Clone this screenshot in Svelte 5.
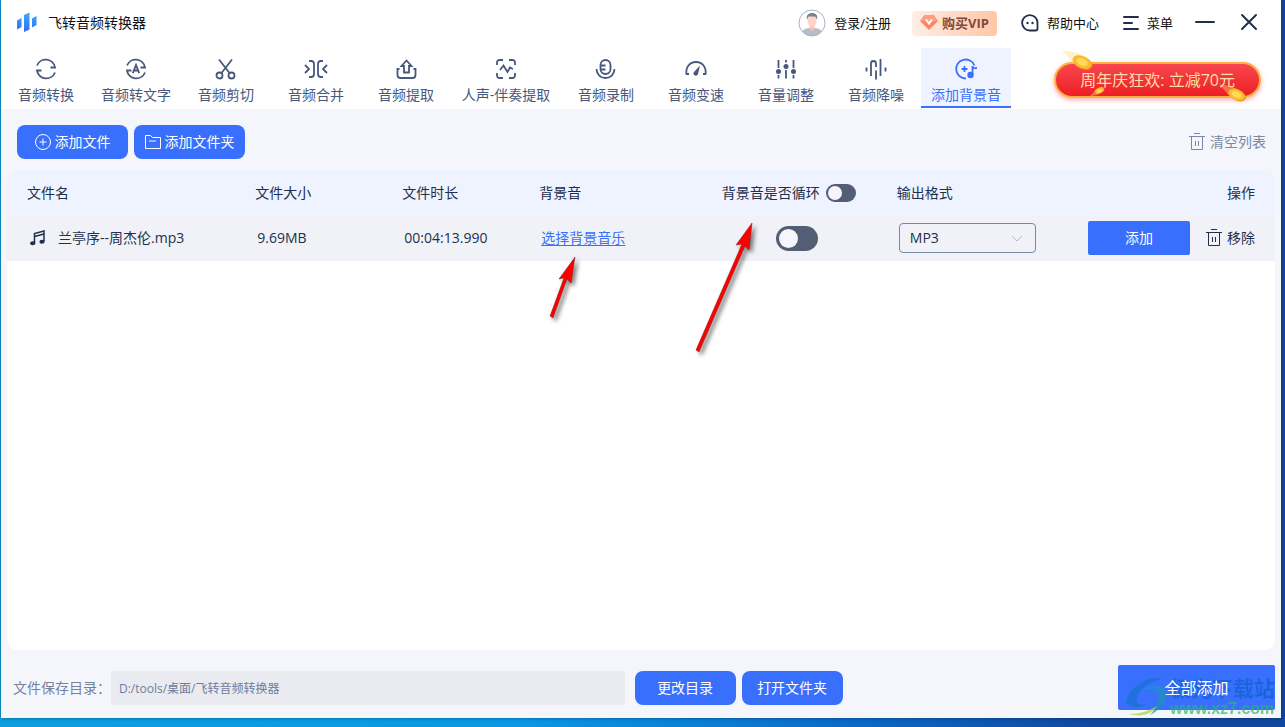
<script lang="ts">
  interface Tab {
    id: string;
    label: string;
    wide?: boolean;
  }

  const tabs: Tab[] = [
    { id: 'convert', label: '音频转换' },
    { id: 'text', label: '音频转文字' },
    { id: 'cut', label: '音频剪切' },
    { id: 'merge', label: '音频合并' },
    { id: 'extract', label: '音频提取' },
    { id: 'vocal', label: '人声-伴奏提取', wide: true },
    { id: 'record', label: '音频录制' },
    { id: 'speed', label: '音频变速' },
    { id: 'volume', label: '音量调整' },
    { id: 'denoise', label: '音频降噪' },
    { id: 'bgm', label: '添加背景音' }
  ];

  let active = $state('bgm');
  let loopAll = $state(false);
  let files = $state([
    { name: '兰亭序--周杰伦.mp3', size: '9.69MB', duration: '00:04:13.990', loop: false, format: 'MP3' }
  ]);
  let saveDir = $state('D:/tools/桌面/飞转音频转换器');

  function toggleAll() {
    files.forEach((f) => (f.loop = loopAll));
  }

  function remove(index: number) {
    files.splice(index, 1);
  }
</script>

{#snippet trash()}
  <svg class="trash" viewBox="0 0 16 18" aria-hidden="true">
    <path d="M0 3.500h16M5 .5h6M2.500 3.500v13h11v-13M6.500 8v5M9.500 8v5" />
  </svg>
{/snippet}

{#snippet coin()}
  <svg class="coin-shape" viewBox="0 0 34 22" aria-hidden="true">
    <path d="M0 0 16 3 31 14 26 20 12 14Z" fill="#ffdf70" opacity=".4" />
    <ellipse cx="21" cy="13" rx="10" ry="6" transform="rotate(24 21 13)" fill="#f08a12" />
    <ellipse cx="20" cy="12" rx="10" ry="6" transform="rotate(24 20 12)" fill="#fdb92c" />
    <ellipse cx="20" cy="12" rx="6" ry="3.500" transform="rotate(24 20 12)" fill="#ffd95c" />
  </svg>
{/snippet}

<div class="desktop">
  <div class="window">
    <header class="titlebar">
      <svg class="logo" viewBox="0 0 22 22" aria-hidden="true">
        <defs>
          <linearGradient id="logo-fill" x1="0" y1="0" x2="0" y2="1">
            <stop offset="0" stop-color="#37b0fb" />
            <stop offset="1" stop-color="#3567fb" />
          </linearGradient>
        </defs>
        <path d="M1 8.500 5.500 6v9L1 17.500ZM8 3l5.500-2.500v17L8 20ZM16 6.500 20.500 4v9L16 15.500Z" fill="url(#logo-fill)" />
      </svg>
      <h1>飞转音频转换器</h1>

      <div class="account">
        <button class="plain login">
          <svg class="avatar" viewBox="0 0 28 28" aria-hidden="true">
            <clipPath id="avatar-clip"><circle cx="14" cy="14" r="13" /></clipPath>
            <circle cx="14" cy="14" r="13" fill="#fff" />
            <g clip-path="url(#avatar-clip)">
              <path d="M3 28c0-7 4-8.500 8-9h6c4 .5 8 2 8 9Z" fill="#b4bec9" />
              <path d="M11.500 15h5v5l-2.500 2-2.500-2Z" fill="#fbc3b4" />
              <ellipse cx="14" cy="12" rx="4.500" ry="5.500" fill="#ffd3c5" />
              <path d="M9 11c-1-5 1.500-7 5-7 4 0 6 2 5 7-1-2.500-1-3-2.500-3.500H11C9.800 8 9.800 9 9 11Z" fill="#76828f" />
            </g>
            <circle cx="14" cy="14" r="13" fill="none" stroke="#aab2bd" />
          </svg>
          登录/注册
        </button>
        <button class="vip">
          <svg viewBox="0 0 18 16" aria-hidden="true">
            <path d="M4.500 0h9L18 6 9 15 0 6Z" fill="#fd8469" />
            <path d="M4.500 0h9L18 6H0Z" fill="#fe9f85" />
            <path d="M6 4.500 9 8.500l3-4" fill="none" stroke="#fff" stroke-width="2" />
          </svg>
          购买VIP
        </button>
        <button class="plain help">
          <svg viewBox="0 0 18 18" aria-hidden="true">
            <path d="M9 16.500A7.700 7.700 0 1 1 16.500 9v5.500a2 2 0 0 1-2 2Z" fill="none" stroke="#222f4c" stroke-width="1.800" />
            <circle cx="6.500" cy="9" r="1.200" fill="#222f4c" />
            <circle cx="11.500" cy="9" r="1.200" fill="#222f4c" />
          </svg>
          帮助中心
        </button>
        <button class="plain menu">
          <svg viewBox="0 0 16 16" aria-hidden="true">
            <path d="M1 2h14M1 8h8M1 14h14" fill="none" stroke="#222f4c" stroke-width="2" stroke-linecap="round" />
          </svg>
          菜单
        </button>
        <button class="plain" aria-label="最小化">
          <svg class="control" viewBox="0 0 20 20" aria-hidden="true"><path d="M1 9h18" /></svg>
        </button>
        <button class="plain close" aria-label="关闭">
          <svg class="control" viewBox="0 0 20 20" aria-hidden="true"><path d="m3 2 14 14M17 2 3 16" /></svg>
        </button>
      </div>
    </header>

    <nav class="tabs">
      {#each tabs as tab (tab.id)}
        <button class="tab" class:wide={tab.wide} class:active={active === tab.id} onclick={() => (active = tab.id)}>
          <svg viewBox="0 0 24 24" aria-hidden="true">
            {#if tab.id === 'convert' || tab.id === 'text'}
              <path d="M3 8.500a9.400 9.400 0 0 1 18 2h-4.500M21 15.500a9.400 9.400 0 0 1-18-2h4.500" />
              {#if tab.id === 'text'}
                <path d="M8.800 16.200 12 8l3.200 8.200M10 13.500h4" />
              {/if}
            {:else if tab.id === 'cut'}
              <circle cx="5.500" cy="18.500" r="3" />
              <circle cx="17.500" cy="18.500" r="3" />
              <path d="M5 2.500 15.500 16M18 2.500 7.500 16" />
            {:else if tab.id === 'merge'}
              <path d="m1 8 4 4-4 4M5 4h2a3 3 0 0 1 3 3v10a3 3 0 0 1-3 3H5M23 8l-4 4 4 4M19 4h-2a3 3 0 0 0-3 3v10a3 3 0 0 0 3 3h2" />
            {:else if tab.id === 'extract'}
              <path d="m12.500 3.500 5 5.500h-2.500v6.500h-5V9H7.500ZM5.500 12h-2v6a3 3 0 0 0 3 3h12a3 3 0 0 0 3-3v-6h-2" />
            {:else if tab.id === 'vocal'}
              <path d="M3 8V5.500A2.500 2.500 0 0 1 5.500 3H9M15 3h3.500A2.500 2.500 0 0 1 21 5.500V8M21 16v2.500a2.500 2.500 0 0 1-2.500 2.500H15M9 21H5.500A2.500 2.500 0 0 1 3 18.500V16M6 13l3.500-4.500 4 6.500 2.500-4.500 3 1.500" />
            {:else if tab.id === 'record'}
              <rect x="6.500" y="3" width="10" height="14" rx="5" />
              <path d="M2.500 12c.3 5.500 4 9 9 9s8.700-3.500 9-9M7 8.500h4.500M7 12.500h4.500" />
            {:else if tab.id === 'speed'}
              <path d="M5 17H2.500C1.500 10.500 5.500 5 12 5s10.500 5.500 9.500 12H19" />
              <path class="needle" d="M16 8.500 14 17a2.300 2.300 0 1 1-3.500-2.500Z" />
            {:else if tab.id === 'volume'}
              <path d="M4.500 3v8M4.500 18v3.500M12 3v2.500M12 13v8.500M19.500 3v8M19.500 18v3.500" />
              <circle class="dot" cx="4.500" cy="14.500" r="2.500" />
              <circle class="dot" cx="12" cy="9.500" r="2.500" />
              <circle class="dot" cx="19.500" cy="14.500" r="2.500" />
            {:else if tab.id === 'denoise'}
              <path d="M2.500 10.500v4M7 19V6.500a2.500 2.500 0 0 1 5 0V10M12 13.500v9M16.500 2v17M21.500 10.500v4" />
            {:else}
              <path d="M20.500 8.500A9.500 9.500 0 1 0 12 21.500M7.500 12h6M10.500 9v6M18.500 18V9c0 2 1.500 2.500 4.500 2" />
              <circle class="dot" cx="16.500" cy="18" r="3.200" />
            {/if}
          </svg>
          <span>{tab.label}</span>
        </button>
      {/each}
      <button class="promo">
        <span class="coin coin-top">{@render coin()}</span>
        周年庆狂欢: 立减70元
        <span class="coin coin-bottom">{@render coin()}</span>
        <span class="coin coin-small">{@render coin()}</span>
      </button>
    </nav>

    <div class="toolbar">
      <button class="primary">
        <svg viewBox="0 0 16 16" aria-hidden="true"><circle cx="8" cy="8" r="7.500" /><path d="M8 4.500v7M4.500 8h7" /></svg>
        添加文件
      </button>
      <button class="primary">
        <svg viewBox="0 0 16 16" aria-hidden="true"><path d="M.5 1.500h5l2 2h8v11H.5ZM4 7h7" /></svg>
        添加文件夹
      </button>
      <button class="clear" onclick={() => (files = [])}>
        {@render trash()}
        清空列表
      </button>
    </div>

    <main class="panel">
      <table>
        <colgroup>
          <col class="col-name" />
          <col class="col-size" />
          <col class="col-duration" />
          <col class="col-music" />
          <col class="col-loop" />
          <col class="col-format" />
          <col />
        </colgroup>
        <thead>
          <tr>
            <th>文件名</th>
            <th>文件大小</th>
            <th>文件时长</th>
            <th>背景音</th>
            <th>
              <label class="loop-all">
                背景音是否循环
                <input class="switch small" type="checkbox" bind:checked={loopAll} onchange={toggleAll} />
              </label>
            </th>
            <th>输出格式</th>
            <th class="end">操作</th>
          </tr>
        </thead>
        <tbody>
          {#each files as file, i (file.name)}
            <tr>
              <td>
                <div class="file">
                  <svg viewBox="0 0 16 16" aria-hidden="true">
                    <path d="M5.500 13V3.500L15 1v10.500M5.500 6.500 15 4" fill="none" stroke="#222f4c" stroke-width="1.500" />
                    <ellipse cx="3.700" cy="13.200" rx="2.600" ry="2" fill="#222f4c" />
                    <ellipse cx="13" cy="11.700" rx="2.600" ry="2" fill="#222f4c" />
                  </svg>
                  {file.name}
                </div>
              </td>
              <td>{file.size}</td>
              <td>{file.duration}</td>
              <td><a href="#music">选择背景音乐</a></td>
              <td class="loop">
                <input class="switch" type="checkbox" aria-label="背景音是否循环" bind:checked={file.loop} />
              </td>
              <td>
                <div class="format">
                  <select aria-label="输出格式" bind:value={file.format}>
                    <option>MP3</option>
                    <option>WAV</option>
                    <option>FLAC</option>
                  </select>
                  <svg viewBox="0 0 12 8" aria-hidden="true"><path d="m1 1 5 5 5-5" /></svg>
                </div>
              </td>
              <td>
                <div class="actions">
                  <button class="add">添加</button>
                  <button class="remove" onclick={() => remove(i)}>
                    {@render trash()}
                    移除
                  </button>
                </div>
              </td>
            </tr>
          {/each}
        </tbody>
      </table>

      <svg class="arrow arrow-music" viewBox="0 0 36 70" aria-hidden="true">
        <path d="m2 61 14-38-5 1L27 2l-4 26-4-4L5 63Z" />
      </svg>
      <svg class="arrow arrow-loop" viewBox="0 0 70 138" aria-hidden="true">
        <path d="m2 129 46-106-6 1L58 2l-3 27-4-4L5 131Z" />
      </svg>
    </main>

    <footer>
      <label for="save-dir">文件保存目录：</label>
      <input id="save-dir" class="path" type="text" readonly bind:value={saveDir} />
      <div class="folder-buttons">
        <button class="primary">更改目录</button>
        <button class="primary">打开文件夹</button>
      </div>
      <div class="add-all-box">
        <button class="add-all"><span>全部添加</span></button>
        <div class="watermark">
          <svg viewBox="0 0 44 40" aria-hidden="true">
            <defs>
              <linearGradient id="swirl-fill" x1="0" y1="0" x2="1" y2="1">
                <stop offset="0" stop-color="#1f8df0" />
                <stop offset="1" stop-color="#1b9c92" />
              </linearGradient>
            </defs>
            <path d="M38 1C20-1 3 12 1 26c6 5 15 6 22 1-9 2-13-1-11-7C15 10 26 5 38 1Z" fill="#1672cf" />
            <path d="M17 13c7-6 20-7 24 1 3 9-6 19-16 24 7-8 11-17 7-22-3-4-9-5-15-3Z" fill="url(#swirl-fill)" />
            <path d="M4 37c10 0 20-3 28-8-4 7-14 12-28 8Z" fill="#b2d23b" />
          </svg>
          <div>
            <strong>极光下载站</strong>
            <em>www.xz7.com</em>
          </div>
        </div>
      </div>
    </footer>
  </div>
</div>

<style>
  :global(body) {
    margin: 0;
  }

  .desktop {
    box-sizing: border-box;
    display: flex;
    min-height: 100vh;
    padding: 0 4px 9px 1px;
    background: linear-gradient(90deg, #0b9fe0 0%, #0a98e4 40%, #0a6cc8 65%, #1048a0 85%, #1048a0 100%);
    font-family: 'Open Sans', 'Noto Sans CJK SC', sans-serif;
    font-size: 14px;
    line-height: 20px;
    color: #222f4c;
  }

  .window {
    display: flex;
    flex: 1;
    flex-direction: column;
    min-width: 0;
    background: #f5f6fc;
    box-shadow: 0 0 4px rgba(0, 0, 0, 0.4);
  }

  button,
  input,
  select {
    font: inherit;
    color: inherit;
  }

  button {
    display: flex;
    align-items: center;
    justify-content: center;
    padding: 0;
    border: 0;
    background: none;
    white-space: nowrap;
    cursor: pointer;
  }

  svg {
    display: block;
    flex: none;
  }

  .titlebar {
    display: flex;
    align-items: center;
    gap: 10px;
    height: 48px;
    padding: 0 22px 2px 15px;
    background: #fff;
    box-sizing: border-box;
  }

  .logo {
    width: 22px;
    height: 22px;
  }

  h1 {
    margin: 0;
    font-size: 14px;
    font-weight: 400;
    color: #111;
  }

  .account {
    display: flex;
    align-items: center;
    margin-left: auto;
    font-size: 13px;
    color: #111;
  }

  .plain {
    gap: 8px;
  }

  .avatar {
    width: 28px;
    height: 28px;
  }

  .vip {
    gap: 4px;
    height: 25px;
    margin: 0 24px 0 21px;
    padding: 0 8px;
    border-radius: 4px;
    background: linear-gradient(90deg, #ffeee6, #ffc7a6);
    font-weight: 700;
    color: #83483a;
  }

  .vip svg {
    width: 18px;
    height: 16px;
  }

  .help svg {
    width: 18px;
    height: 18px;
  }

  .menu {
    margin: 0 22px 0 24px;
  }

  .menu svg {
    width: 16px;
    height: 16px;
  }

  .control {
    width: 20px;
    height: 20px;
    fill: none;
    stroke: #222f4c;
    stroke-width: 2;
    stroke-linecap: round;
  }

  .close {
    margin-left: 24px;
  }

  .tabs {
    display: flex;
    align-items: flex-start;
    height: 61px;
    padding-right: 20px;
    background: #fff;
  }

  .tab {
    box-sizing: border-box;
    flex-direction: column;
    justify-content: flex-start;
    gap: 4px;
    width: 90px;
    height: 60px;
    padding-top: 9px;
    border-bottom: 2px solid transparent;
    color: #47587d;
  }

  .tab.wide {
    width: 110px;
  }

  .tab.active {
    border-bottom-color: #3a70fc;
    background: #eff3ff;
    color: #3a70fc;
  }

  .tab svg {
    width: 24px;
    height: 24px;
    fill: none;
    stroke: currentColor;
    stroke-width: 1.8;
  }

  .tab .dot {
    fill: currentColor;
    stroke: none;
  }

  .tab .needle {
    fill: currentColor;
    stroke: none;
  }

  .promo {
    position: relative;
    box-sizing: border-box;
    height: 36px;
    margin: 14px 0 0 auto;
    padding: 0 24px;
    border: 2px solid #fdb03e;
    border-radius: 18px;
    background: linear-gradient(180deg, #f8474f, #ec1f24);
    box-shadow: 0 2px 5px rgba(240, 50, 60, 0.4);
    font-size: 16px;
    color: #ffdda8;
  }

  .coin {
    position: absolute;
  }

  .coin-shape {
    width: 100%;
  }

  .coin-top {
    top: -14px;
    left: 6px;
    width: 34px;
  }

  .coin-bottom {
    right: 10px;
    bottom: -7px;
    width: 30px;
  }

  .coin-small {
    bottom: 0;
    left: 34px;
    width: 16px;
    transform: scaleY(-1);
  }

  .toolbar {
    display: flex;
    align-items: center;
    gap: 6px;
    box-sizing: border-box;
    height: 61px;
    padding: 5px 15px 0 16px;
  }

  .primary {
    gap: 4px;
    width: 111px;
    height: 34px;
    border-radius: 8px;
    background: #386ffd;
    color: #fff;
  }

  .primary svg {
    width: 16px;
    height: 16px;
    fill: none;
    stroke: #fff;
  }

  .clear {
    gap: 5px;
    margin-left: auto;
    color: #7988a7;
  }

  .trash {
    width: 16px;
    height: 18px;
    fill: none;
    stroke: currentColor;
  }

  .panel {
    position: relative;
    flex: 1;
    margin: 0 6px;
    border-radius: 10px;
    background: #fff;
  }

  table {
    width: 100%;
    border-spacing: 0;
    table-layout: fixed;
  }

  .col-name {
    width: 18%;
  }

  .col-size {
    width: 11.6%;
  }

  .col-duration {
    width: 10.8%;
  }

  .col-music {
    width: 14.4%;
  }

  .col-loop {
    width: 13.8%;
  }

  .col-format {
    width: 14.5%;
  }

  th {
    height: 45px;
    padding: 0 0 0 20px;
    background: #eff3ff;
    font-weight: 400;
    text-align: left;
    white-space: nowrap;
  }

  th:first-child {
    border-top-left-radius: 10px;
  }

  th:last-child {
    border-top-right-radius: 10px;
  }

  th.end {
    padding-right: 20px;
    text-align: right;
  }

  td {
    height: 46px;
    padding: 0 0 0 22px;
    background: #f1f2f7;
    white-space: nowrap;
  }

  td:last-child {
    padding-right: 20px;
  }

  .file {
    display: flex;
    align-items: center;
    gap: 13px;
  }

  .file svg {
    width: 16px;
    height: 16px;
  }

  a {
    color: #3a70fc;
    text-decoration: underline;
    text-underline-offset: 2px;
  }

  .loop-all {
    display: flex;
    align-items: center;
    gap: 6px;
  }

  .loop {
    padding-right: 6px;
    text-align: center;
  }

  .switch {
    display: inline-block;
    box-sizing: border-box;
    width: 42px;
    height: 25px;
    margin: 0;
    padding: 3px;
    border-radius: 13px;
    background: #535d76;
    appearance: none;
    vertical-align: middle;
    cursor: pointer;
  }

  .switch::before {
    content: '';
    display: block;
    width: 19px;
    height: 19px;
    border-radius: 50%;
    background: #f5f6fc;
  }

  .switch.small {
    width: 30px;
    height: 18px;
    padding: 2px;
    border-radius: 9px;
  }

  .switch.small::before {
    width: 14px;
    height: 14px;
  }

  .switch:checked {
    background: #386ffd;
  }

  .switch:checked::before {
    margin-left: auto;
  }

  .format {
    position: relative;
    width: 137px;
  }

  .format select {
    display: block;
    box-sizing: border-box;
    width: 100%;
    height: 30px;
    padding: 0 30px 0 10px;
    border: 1px solid #7787a8;
    border-radius: 4px;
    background: transparent;
    appearance: none;
  }

  .format svg {
    position: absolute;
    top: 12px;
    right: 13px;
    width: 12px;
    height: 8px;
    fill: none;
    stroke: #b3bac8;
    pointer-events: none;
  }

  .actions {
    display: flex;
    align-items: center;
    justify-content: flex-end;
    gap: 16px;
  }

  .add {
    width: 102px;
    height: 34px;
    border-radius: 2px;
    background: #386ffd;
    color: #fff;
  }

  .remove {
    gap: 5px;
  }

  .arrow {
    position: absolute;
    fill: #fe0000;
    stroke: #7d1c1c;
    stroke-width: 0.5;
    filter: drop-shadow(3px 3px 2px rgba(0, 0, 0, 0.5));
    pointer-events: none;
  }

  .arrow-music {
    top: 85px;
    left: 42.7%;
    width: 36px;
    height: 70px;
  }

  .arrow-loop {
    top: 51px;
    left: 54.2%;
    width: 70px;
    height: 138px;
  }

  footer {
    display: flex;
    align-items: center;
    padding: 15px 6px 8px 12px;
  }

  footer label {
    flex: none;
    color: #76829d;
  }

  .path {
    box-sizing: border-box;
    width: 40.7%;
    min-width: 0;
    height: 34px;
    padding: 0 8px;
    border: 0;
    border-radius: 2px;
    background: #e9ebf0;
    font-size: 12px;
    color: #6e7d9e;
  }

  .folder-buttons {
    display: flex;
    gap: 6px;
    margin: 0 10px;
  }

  footer .primary {
    width: 101px;
  }

  .add-all-box {
    position: relative;
    margin-left: auto;
  }

  .add-all {
    width: 157px;
    height: 45px;
    border-radius: 2px;
    background: #386ffd;
    font-size: 16px;
    color: #fff;
  }

  /* keeps the label readable above the watermark */
  .add-all span {
    position: relative;
    z-index: 1;
  }

  .watermark {
    position: absolute;
    top: 11px;
    right: 0;
    display: flex;
    align-items: center;
    gap: 1px;
    opacity: 0.7;
    pointer-events: none;
  }

  .watermark svg {
    width: 44px;
    height: 40px;
  }

  .watermark strong,
  .watermark em {
    display: block;
    font-style: normal;
    font-weight: 700;
    white-space: nowrap;
  }

  .watermark strong {
    font-size: 21px;
    line-height: 24px;
    color: #0f62cf;
  }

  .watermark em {
    font-family: 'Liberation Sans', sans-serif;
    font-size: 16px;
    line-height: 18px;
    color: #2fb765;
  }
</style>
